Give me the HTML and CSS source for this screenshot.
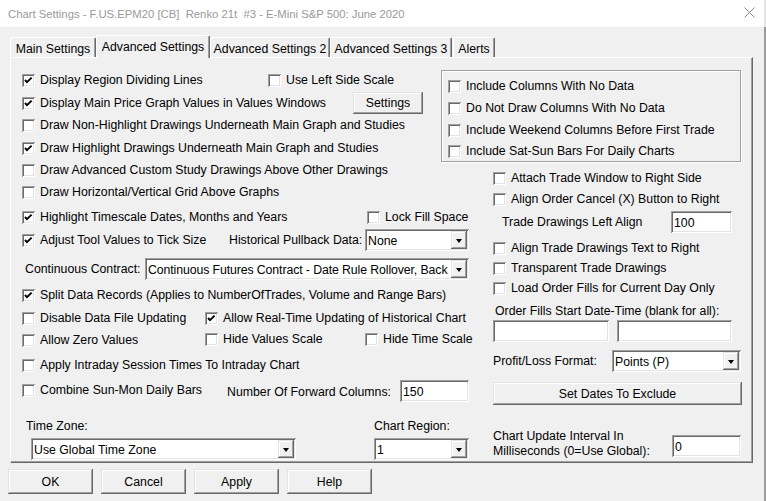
FILE: index.html
```html
<!DOCTYPE html>
<html>
<head>
<meta charset="utf-8">
<link rel="stylesheet" href="styles.css">
</head>
<body>
<div class="screen">
  <div class="window">
    <div class="titlebar">
      <span class="title">Chart Settings - F.US.EPM20 [CB]  Renko 21t  #3 - E-Mini S&amp;P 500: June 2020</span>
      <svg class="close" width="11" height="11" viewBox="0 0 11 11"><path d="M0.5 0.5L10.5 10.5M10.5 0.5L0.5 10.5" stroke="#8a8a8a" stroke-width="1" fill="none"/></svg>
    </div>

    <div class="tabs">
      <div class="tab t-main">Main Settings</div>
      <div class="tab sel t-adv">Advanced Settings</div>
      <div class="tab t-adv2">Advanced Settings 2</div>
      <div class="tab t-adv3">Advanced Settings 3</div>
      <div class="tab t-alerts">Alerts</div>
    </div>

    <div class="panel">
      <div class="left">
        <div class="row">
          <label class="cb w246"><span class="box on"><svg viewBox="0 0 13 13"><polyline points="3,6 5,8.2 9.6,3.6"/></svg></span>Display Region Dividing Lines</label>
          <label class="cb"><span class="box"></span>Use Left Side Scale</label>
        </div>
        <div class="row">
          <label class="cb w331"><span class="box on"><svg viewBox="0 0 13 13"><polyline points="3,6 5,8.2 9.6,3.6"/></svg></span>Display Main Price Graph Values in Values Windows</label>
          <div class="btn settings">Settings</div>
        </div>
        <div class="row">
          <label class="cb"><span class="box"></span>Draw Non-Highlight Drawings Underneath Main Graph and Studies</label>
        </div>
        <div class="row">
          <label class="cb"><span class="box on"><svg viewBox="0 0 13 13"><polyline points="3,6 5,8.2 9.6,3.6"/></svg></span>Draw Highlight Drawings Underneath Main Graph and Studies</label>
        </div>
        <div class="row">
          <label class="cb"><span class="box"></span>Draw Advanced Custom Study Drawings Above Other Drawings</label>
        </div>
        <div class="row">
          <label class="cb"><span class="box"></span>Draw Horizontal/Vertical Grid Above Graphs</label>
        </div>
        <div class="row">
          <label class="cb w345"><span class="box on"><svg viewBox="0 0 13 13"><polyline points="3,6 5,8.2 9.6,3.6"/></svg></span>Highlight Timescale Dates, Months and Years</label>
          <label class="cb"><span class="box"></span>Lock Fill Space</label>
        </div>
        <div class="row">
          <label class="cb w207"><span class="box on"><svg viewBox="0 0 13 13"><polyline points="3,6 5,8.2 9.6,3.6"/></svg></span>Adjust Tool Values to Tick Size</label>
          <span class="lbl w136">Historical Pullback Data:</span>
          <div class="field select w104"><span class="val">None</span><span class="drop"><i></i></span></div>
        </div>
        <div class="row">
          <span class="lbl ml3 w120">Continuous Contract:</span>
          <div class="field select w324"><span class="val tight">Continuous Futures Contract - Date Rule Rollover, Back</span><span class="drop"><i></i></span></div>
        </div>
        <div class="row">
          <label class="cb"><span class="box on"><svg viewBox="0 0 13 13"><polyline points="3,6 5,8.2 9.6,3.6"/></svg></span>Split Data Records (Applies to NumberOfTrades, Volume and Range Bars)</label>
        </div>
        <div class="row">
          <label class="cb w183"><span class="box"></span>Disable Data File Updating</label>
          <label class="cb"><span class="box on"><svg viewBox="0 0 13 13"><polyline points="3,6 5,8.2 9.6,3.6"/></svg></span>Allow Real-Time Updating of Historical Chart</label>
        </div>
        <div class="row">
          <label class="cb w183"><span class="box"></span>Allow Zero Values</label>
          <label class="cb w160 up1"><span class="box"></span>Hide Values Scale</label>
          <label class="cb up1"><span class="box"></span>Hide Time Scale</label>
        </div>
        <div class="row">
          <label class="cb"><span class="box"></span>Apply Intraday Session Times To Intraday Chart</label>
        </div>
        <div class="row">
          <label class="cb w205"><span class="box"></span>Combine Sun-Mon Daily Bars</label>
          <span class="lbl w173 dn2">Number Of Forward Columns:</span>
          <div class="field w69 dn1"><span class="val">150</span></div>
        </div>
        <div class="row">
          <span class="lbl ml4 w348">Time Zone:</span>
          <span class="lbl">Chart Region:</span>
        </div>
        <div class="row">
          <div class="field select ml9 w265"><span class="val">Use Global Time Zone</span><span class="drop"><i></i></span></div>
          <div class="field select ml78 w95"><span class="val">1</span><span class="drop"><i></i></span></div>
        </div>
      </div>

      <div class="right">
        <div class="group">
          <label class="cb"><span class="box"></span>Include Columns With No Data</label>
          <label class="cb"><span class="box"></span>Do Not Draw Columns With No Data</label>
          <label class="cb"><span class="box"></span>Include Weekend Columns Before First Trade</label>
          <label class="cb"><span class="box"></span>Include Sat-Sun Bars For Daily Charts</label>
        </div>
        <div class="rgrid">
          <label class="cb"><span class="box"></span>Attach Trade Window to Right Side</label>
          <label class="cb"><span class="box"></span>Align Order Cancel (X) Button to Right</label>
          <div class="row">
            <span class="lbl ml9 w169">Trade Drawings Left Align</span>
            <div class="field w61"><span class="val">100</span></div>
          </div>
          <label class="cb"><span class="box"></span>Align Trade Drawings Text to Right</label>
          <label class="cb"><span class="box"></span>Transparent Trade Drawings</label>
          <label class="cb"><span class="box"></span>Load Order Fills for Current Day Only</label>
          <div class="row"><span class="lbl ml2">Order Fills Start Date-Time (blank for all):</span></div>
          <div class="row gap8">
            <div class="field w116"></div>
            <div class="field w115"></div>
          </div>
          <div class="row">
            <span class="lbl w119">Profit/Loss Format:</span>
            <div class="field select w129"><span class="val">Points (P)</span><span class="drop"><i></i></span></div>
          </div>
          <div class="btn setdates">Set Dates To Exclude</div>
          <div class="row">
            <span class="lbl two w179">Chart Update Interval In<br>Milliseconds (0=Use Global):</span>
            <div class="field w69"><span class="val">0</span></div>
          </div>
        </div>
      </div>
    </div>

    <div class="buttons">
      <div class="btn dlg">OK</div>
      <div class="btn dlg">Cancel</div>
      <div class="btn dlg">Apply</div>
      <div class="btn dlg">Help</div>
    </div>
  </div>
  <div class="edge"></div>
</div>
</body>
</html>
```

FILE: styles.css
```css
html, body {
  margin: 0;
  padding: 0;
}
body {
  width: 766px;
  height: 501px;
  overflow: hidden;
  background: #f0f0f0;
  font-family: "Liberation Sans", Arial, sans-serif;
  font-size: 12.3px;
  color: #000;
}
.screen {
  display: flex;
  width: 766px;
  height: 501px;
}
.window {
  width: 764px;
  height: 501px;
  background: #f0f0f0;
  flex: none;
}
.edge {
  flex: 1;
  background: linear-gradient(#e6e6e6 0 27px, #9c9c9c 27px);
}

/* title bar */
.titlebar {
  height: 27px;
  background: #fff;
  display: flex;
  align-items: center;
  padding-left: 8px;
}
.title {
  white-space: pre;
  color: #9a9a9a;
  font-size: 11.3px;
  padding-top: 1px;
}
.close {
  margin-left: auto;
  margin-right: 9px;
  margin-top: -2px;
}

/* tabs */
.tabs {
  display: flex;
  margin-top: 8px;
  padding-left: 10px;
  height: 22px;
  position: relative;
  z-index: 1;
}
.tab {
  box-sizing: border-box;
  height: 20px;
  margin-top: 2px;
  border-top: 1px solid #fff;
  border-left: 1px solid #fff;
  border-right: 1px solid #696969;
  box-shadow: inset -1px 0 #a0a0a0;
  border-radius: 2px 2px 0 0;
  display: flex;
  align-items: center;
  justify-content: center;
  padding-top: 2px;
  white-space: nowrap;
  background: #f0f0f0;
}
.tab.sel {
  height: 23px;
  margin-top: 0;
  padding-top: 0;
  padding-bottom: 1px;
}
.t-main { width: 86px; }
.t-adv { width: 114px; }
.t-adv2 { width: 120px; }
.t-adv3 { width: 122px; }
.t-alerts { width: 42px; margin-left: 1px; }

/* tab panel */
.panel {
  box-sizing: border-box;
  margin-left: 10px;
  width: 743px;
  height: 406px;
  border-top: 1px solid #fff;
  border-left: 1px solid #fff;
  border-right: 1px solid #696969;
  border-bottom: 1px solid #696969;
  box-shadow: inset -1px -1px #a0a0a0;
  padding: 11px 0 0 11px;
  display: flex;
  gap: 23px;
}
.left {
  width: 448px;
  flex: none;
  display: grid;
  grid-template-rows: 23px 22px 23px 22px 22px 25px 23px 29px 26px 23px 22px 25px 25px 36px 23px 22px;
}
.row {
  display: flex;
  align-items: center;
  height: 22px;
  white-space: nowrap;
}
.right {
  width: 249px;
  flex: none;
  display: flex;
  flex-direction: column;
}

/* checkbox */
.cb {
  display: flex;
  align-items: center;
  height: 22px;
  white-space: nowrap;
  flex: none;
}
.box {
  width: 13px;
  height: 13px;
  flex: none;
  margin-right: 5px;
  background: #fff;
  box-shadow: inset 1px 1px #a0a0a0, inset -1px -1px #fff, inset 2px 2px #696969, inset -2px -2px #e3e3e3;
  display: flex;
}
.box svg {
  width: 13px;
  height: 13px;
}
.box polyline {
  fill: none;
  stroke: #000;
  stroke-width: 1.9;
}

.lbl {
  white-space: nowrap;
  flex: none;
}
.lbl.two {
  white-space: normal;
  line-height: 15px;
  align-self: flex-start;
  margin-top: -6px;
}

/* fields */
.field {
  box-sizing: border-box;
  height: 22px;
  background: #fff;
  box-shadow: inset 1px 1px #a0a0a0, inset -1px -1px #fff, inset 2px 2px #696969, inset -2px -2px #e3e3e3;
  display: flex;
  align-items: center;
  flex: none;
  position: relative;
}
.field .val {
  padding-left: 3px;
  white-space: nowrap;
  flex: 1;
  padding-top: 1px;
}
.field .val.tight {
  letter-spacing: -0.1px;
}
.drop {
  position: absolute;
  right: 2px;
  top: 2px;
  bottom: 2px;
  width: 16px;
  background: #f0f0f0;
  box-shadow: inset -1px -1px #696969, inset 1px 1px #e3e3e3, inset -2px -2px #a0a0a0, inset 2px 2px #fff;
  display: flex;
  align-items: center;
  justify-content: center;
}
.drop i {
  width: 0;
  height: 0;
  border-left: 3.5px solid transparent;
  border-right: 3.5px solid transparent;
  border-top: 4px solid #000;
  margin-left: -1px;
  margin-top: 1px;
}

/* buttons */
.btn {
  box-sizing: border-box;
  background: #f0f0f0;
  box-shadow: inset -1px -1px #696969, inset 1px 1px #e3e3e3, inset -2px -2px #a0a0a0, inset 2px 2px #fff;
  display: flex;
  align-items: center;
  justify-content: center;
  flex: none;
  white-space: nowrap;
}
.settings {
  width: 70px;
  height: 22px;
}
.setdates {
  width: 249px;
  height: 23px;
}
.buttons {
  display: flex;
  gap: 8px;
  margin: 6px 0 0 8px;
}
.dlg {
  width: 85px;
  height: 25px;
}

/* group box */
.group {
  box-sizing: border-box;
  margin: 1px 0 0 -52px;
  width: 300px;
  height: 92px;
  border: 1px solid #a0a0a0;
  box-shadow: inset 1px 1px #fff, 1px 1px #fff;
  padding: 4px 0 0 6px;
  display: grid;
  grid-template-rows: 22px 22px 21px 22px;
}
.rgrid {
  margin-top: 5px;
  display: grid;
  grid-template-rows: 21px 23px 26px 20px 20px 23px 20px 30px 32px 53px 22px;
}

/* sizing helpers */
.w61 { width: 61px; }
.w69 { width: 69px; }
.w95 { width: 95px; }
.w104 { width: 104px; }
.w115 { width: 115px; }
.w116 { width: 116px; }
.w119 { width: 119px; }
.w120 { width: 120px; }
.w129 { width: 129px; }
.w136 { width: 136px; }
.w160 { width: 160px; }
.w169 { width: 169px; }
.w173 { width: 173px; }
.w179 { width: 179px; }
.w183 { width: 183px; }
.w205 { width: 205px; }
.w207 { width: 207px; }
.w246 { width: 246px; }
.w265 { width: 265px; }
.w324 { width: 324px; }
.w331 { width: 331px; }
.w345 { width: 345px; }
.w348 { width: 348px; }
.ml2 { margin-left: 2px; }
.ml3 { margin-left: 3px; }
.ml4 { margin-left: 4px; }
.ml9 { margin-left: 9px; }
.ml78 { margin-left: 78px; }
.gap8 { gap: 8px; }
.up1 { margin-top: -2px; }
.dn1 { margin-top: 2px; }
.dn2 { margin-top: 4px; }
```
